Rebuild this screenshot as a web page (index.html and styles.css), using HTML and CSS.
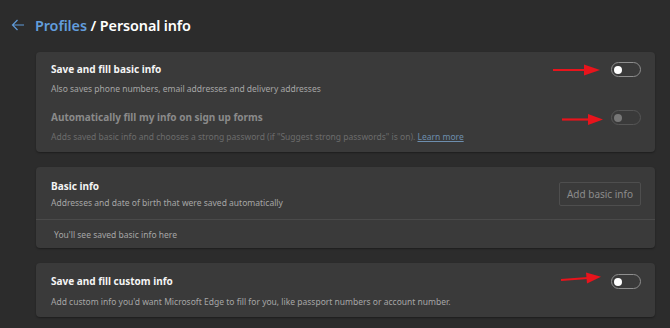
FILE: index.html
```html
<!DOCTYPE html>
<html lang="en">
<head>
<meta charset="utf-8">
<title>Personal info</title>
<link rel="stylesheet" href="styles.css">
</head>
<body>
<header class="top">
  <svg class="back" width="14" height="12" viewBox="0 0 14 12"><path d="M13 6H1.5M6.5 1L1.5 6l5 5" fill="none" stroke="#5f9ad8" stroke-width="1.2"/></svg>
  <h1 class="heading"><span class="crumb">Profiles</span> / Personal info</h1>
</header>
<main class="content">
  <section class="card card-first">
    <div class="row">
      <div class="text">
        <div class="title">Save and fill basic info</div>
        <div class="desc">Also saves phone numbers, email addresses and delivery addresses</div>
      </div>
      <span class="toggle"><span class="knob"></span></span>
    </div>
    <div class="row row-second disabled">
      <div class="text">
        <div class="title">Automatically fill my info on sign up forms</div>
        <div class="desc">Adds saved basic info and chooses a strong password (if "Suggest strong passwords" is on). <span class="link">Learn more</span></div>
      </div>
      <span class="toggle"><span class="knob"></span></span>
    </div>
  </section>
  <section class="card card-split">
    <div class="row row-head">
      <div class="text">
        <div class="title">Basic info</div>
        <div class="desc">Addresses and date of birth that were saved automatically</div>
      </div>
      <span class="button">Add basic info</span>
    </div>
    <div class="empty">You'll see saved basic info here</div>
  </section>
  <section class="card card-last">
    <div class="row">
      <div class="text">
        <div class="title">Save and fill custom info</div>
        <div class="desc">Add custom info you'd want Microsoft Edge to fill for you, like passport numbers or account number.</div>
      </div>
      <span class="toggle"><span class="knob"></span></span>
    </div>
  </section>
</main>
<svg class="arrows" width="670" height="328" viewBox="0 0 670 328">
  <g fill="#e8141c" stroke="#e8141c">
    <line x1="553" y1="70" x2="586" y2="70" stroke-width="2.2"/>
    <polygon points="584,64.5 600,70 584,75.5" stroke="none"/>
    <line x1="562" y1="119.5" x2="590" y2="119.5" stroke-width="2.2"/>
    <polygon points="588,114 603,119.5 588,125" stroke="none"/>
    <line x1="561" y1="280" x2="588" y2="278" stroke-width="2.2"/>
    <polygon points="586,272.6 601,276.8 587,283.4" stroke="none"/>
  </g>
</svg>
</body>
</html>
```
FILE: styles.css
```css
html, body {
  margin: 0;
  padding: 0;
}
body {
  width: 670px;
  height: 328px;
  overflow: hidden;
  background: #2c2c2c;
  font-family: "Noto Sans", "Open Sans", sans-serif;
  color: #fff;
  position: relative;
}
.top {
  display: flex;
  align-items: center;
  gap: 10px;
  height: 50px;
  padding-left: 11px;
  box-sizing: border-box;
}
.back {
  display: block;
}
.heading {
  margin: 0;
  font-size: 14.4px;
  font-weight: 600;
  color: #fff;
  letter-spacing: -0.1px;
}
.crumb {
  color: #629ddc;
}
.content {
  margin: 2px 15px 0 36px;
  display: flex;
  flex-direction: column;
  gap: 15px;
}
.card {
  background: #3a3a3a;
  border-radius: 4px;
  box-shadow: 0 1px 2px rgba(0,0,0,0.35);
  padding: 10px 14px 9px 15px;
}
.card-first {
  padding-top: 9px;
  padding-bottom: 8px;
}
.card-first .desc {
  margin-top: 5px;
}
.row {
  display: flex;
  align-items: flex-start;
  justify-content: space-between;
}
.row-second {
  margin-top: 13px;
}
.text {
  display: flex;
  flex-direction: column;
}
.title {
  font-size: 10px;
  font-weight: 700;
  line-height: 16px;
  color: #f4f4f4;
}
.desc {
  font-size: 8.5px;
  line-height: 14px;
  margin-top: 4px;
  color: #a6a6a6;
}
.disabled .title {
  color: #8a8a8a;
}
.disabled .desc {
  color: #6c6c6c;
}
.link {
  color: #6d8eae;
  text-decoration: underline;
}
.toggle {
  width: 26px;
  height: 13px;
  margin-top: 1px;
  border: 1px solid #8e8e8e;
  border-radius: 8px;
  display: flex;
  align-items: center;
  padding-left: 2px;
  box-sizing: content-box;
  flex: none;
}
.toggle .knob {
  width: 8px;
  height: 8px;
  border-radius: 50%;
  background: #fff;
}
.disabled .toggle {
  border-color: #555;
}
.disabled .toggle .knob {
  background: #777;
}
.card-split {
  padding: 0;
}
.row-head {
  align-items: center;
  padding: 11px 14px 9px 15px;
  border-bottom: 1px solid #4a4a4a;
}
.row-head .desc {
  margin-top: 2px;
}
.button {
  border: 1px solid #4e4e4e;
  border-radius: 2px;
  font-size: 10px;
  color: #8c8c8c;
  padding: 0 6px;
  height: 22px;
  line-height: 22px;
  width: 68px;
  text-align: center;
}
.empty {
  font-size: 8.5px;
  color: #a6a6a6;
  line-height: 14px;
  padding: 8px 18px 6px;
}
.card-last {
  padding-top: 10px;
  padding-bottom: 8px;
}
.card-last .desc {
  margin-top: 6px;
}
.arrows {
  position: absolute;
  left: 0;
  top: 0;
  pointer-events: none;
}
```
